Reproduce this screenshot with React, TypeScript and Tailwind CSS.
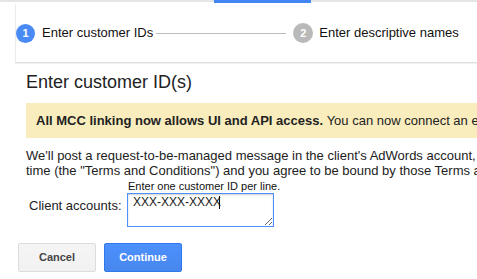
import React from "react";

export default function App() {
  return (
    <div className="w-[477px] h-[279px] overflow-hidden bg-white font-['Liberation_Sans',Arial,sans-serif] text-[#222]">
      {/* top progress bar */}
      <div className="flex h-[3px] items-start">
        <div className="w-[214px] h-[2px] bg-[#e5e5e5]" />
        <div className="w-[97px] h-[3px] bg-[#4285f4]" />
        <div className="flex-1 h-[2px] bg-[#e5e5e5]" />
      </div>

      {/* stepper card */}
      <div className="mt-[1px] ml-[15px] h-[59px] w-[600px] border-l border-[#ececec] border-b border-b-[#dedede] shadow-[0_1px_1px_rgba(0,0,0,0.06)] flex items-center whitespace-nowrap">
        <div className="w-[19px] h-[19px] rounded-full bg-[#4a8af4] text-white text-[11px] font-bold flex items-center justify-center leading-none">
          1
        </div>
        <span className="ml-[7px] text-[13px] text-[#111]">Enter customer IDs</span>
        <div className="ml-[3px] w-[130px] h-px bg-[#bdbdbd]" />
        <div className="ml-[7px] w-[20px] h-[20px] rounded-full bg-[#b9b9b9] text-white text-[11px] font-bold flex items-center justify-center leading-none">
          2
        </div>
        <span className="ml-[6px] text-[13px] text-[#111]">Enter descriptive names</span>
      </div>

      {/* heading */}
      <h1 className="mt-[8px] ml-[26px] text-[18px] leading-[22px] text-[#222]">Enter customer ID(s)</h1>

      {/* banner */}
      <div className="mt-[10px] ml-[26px] w-[600px] h-[35px] bg-[#f9edbe] flex items-center px-[10px] text-[13px] whitespace-nowrap">
        <span className="font-bold">All MCC linking now allows UI and API access.</span>
        <span>&nbsp;You can now connect an existing AdWords account.</span>
      </div>

      {/* paragraph */}
      <div className="mt-[10px] ml-[26px] text-[13px] leading-[15px] whitespace-nowrap">
        <div>We'll post a request-to-be-managed message in the client's AdWords account, which they can accept at any</div>
        <div>time (the "Terms and Conditions") and you agree to be bound by those Terms and Conditions.</div>
      </div>

      {/* label hint */}
      <div className="mt-[2px] ml-[128px] text-[11px] leading-[12px] text-[#111]">Enter one customer ID per line.</div>

      {/* client accounts row */}
      <div className="mt-[1px] flex items-start">
        <span className="w-[127px] pl-[29px] pt-[5px] text-[13px] leading-[15px] text-[#222]">Client accounts:</span>
        <div className="relative">
          <textarea
            defaultValue="XXX-XXX-XXXX"
            className="block w-[147px] h-[34px] border border-[#4d90fe] shadow-[inset_0_1px_2px_rgba(0,0,0,0.2)] px-[5px] pt-[1px] text-[12px] leading-[15px] text-[#222] outline-none"
          />
          <span className="absolute left-[92px] top-[3px] w-px h-[13px] bg-[#111]" />
        </div>
      </div>

      {/* buttons */}
      <div className="mt-[16px] ml-[18px] flex gap-[8px]">
        <button className="w-[78px] h-[29px] rounded-[2px] border border-[#dcdcdc] bg-gradient-to-b from-[#f5f5f5] to-[#f1f1f1] text-[11px] font-bold text-[#444]">
          Cancel
        </button>
        <button className="w-[78px] h-[29px] rounded-[2px] border border-[#3079ed] bg-gradient-to-b from-[#4d90fe] to-[#4787ed] text-[11px] font-bold text-white">
          Continue
        </button>
      </div>
    </div>
  );
}
